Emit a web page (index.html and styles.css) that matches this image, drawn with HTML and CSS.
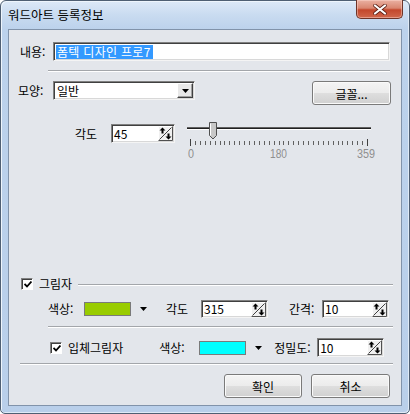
FILE: index.html
```html
<!DOCTYPE html>
<html lang="ko">
<head>
<meta charset="utf-8">
<title>워드아트 등록정보</title>
<link rel="stylesheet" href="styles.css">
</head>
<body>
<div class="window">
  <div class="titlebar">
    <span class="title">워드아트 등록정보</span>
    <div class="close">
      <svg width="14" height="11" viewBox="0 0 14 11"><path d="M2 1.5L12 9.5M12 1.5L2 9.5" stroke="#5a1e14" stroke-width="3.6" stroke-linecap="round"/><path d="M2 1.5L12 9.5M12 1.5L2 9.5" stroke="#ffffff" stroke-width="2.2" stroke-linecap="round"/></svg>
    </div>
  </div>
  <div class="client">
    <div class="row r-content">
      <span class="lbl w33">내용:</span>
      <div class="field textbox"><span class="selected">폼텍 디자인 프로7</span></div>
    </div>
    <div class="sep sep1"></div>
    <div class="row r-shape">
      <span class="lbl w33 lbl-shape">모양:</span>
      <div class="field combo">
        <span class="combo-text">일반</span>
        <span class="dd-btn"><svg width="7" height="4" viewBox="0 0 7 4"><path d="M0 0H7L3.5 4Z" fill="#000"/></svg></span>
      </div>
      <button class="btn btn-font">글꼴...</button>
    </div>
    <div class="row r-angle">
      <span class="lbl lbl-angle">각도</span>
      <div class="field spin spin-angle"><span class="val">45</span><svg class="spin-ic" width="15" height="15" viewBox="0 0 15 15"><rect x="0" y="0" width="15" height="15" fill="#f0f0f0"/><path d="M0.5 14V0.5H14" stroke="#ffffff" fill="none"/><path d="M14.5 0.5V14.5H0.5" stroke="#505050" fill="none"/><path d="M1.5 13.5L13.5 1.5" stroke="#404040"/><path d="M4.5 1.5L1.5 4.5H3.5V7.5H5.5V4.5H7.5Z" fill="#000"/><path d="M10.5 13.5L7.5 10.5H9.5V7.5H11.5V10.5H13.5Z" fill="#000"/></svg></div>
      <div class="slider">
        <svg width="196" height="46" viewBox="0 0 196 46">
          <rect x="4" y="7" width="184" height="1" fill="#606060"/>
          <rect x="4" y="8" width="184" height="1" fill="#202020"/>
          <rect x="4" y="9" width="184" height="1" fill="#ffffff"/>
          <g fill="#404040">
            <rect x="7" y="19" width="1" height="7"/>
            <rect x="184" y="19" width="1" height="7"/>
          </g>
          <g id="ticks" fill="#606060"></g>
          <path d="M26.5 2.5H33.5V15.5L30 19L26.5 15.5Z" fill="#c8c8c8" stroke="#505050"/>
          <path d="M27.5 3.5V15.5" stroke="#ffffff"/>
          <g font-family="Liberation Sans, Arial, sans-serif" font-size="13" fill="#8f8f8f">
            <text x="5" y="38" textLength="6" lengthAdjust="spacingAndGlyphs">0</text>
            <text x="87" y="38" textLength="17" lengthAdjust="spacingAndGlyphs">180</text>
            <text x="174" y="38" textLength="18" lengthAdjust="spacingAndGlyphs">359</text>
          </g>
        </svg>
      </div>
    </div>

    <div class="row g-head">
      <span class="check"><svg width="8" height="7" viewBox="0 0 8 7"><path d="M0.5 3L3 5.5L7.5 0.5" stroke="#000" stroke-width="1.8" fill="none"/></svg></span>
      <span class="lbl ml6">그림자</span>
      <span class="sep-inline"></span>
    </div>
    <div class="row g-row1">
      <span class="lbl lbl-color1">색상:</span>
      <span class="swatch green"></span>
      <span class="arrow"><svg width="7" height="4" viewBox="0 0 7 4"><path d="M0 0H7L3.5 4Z" fill="#000"/></svg></span>
      <span class="lbl lbl-angle2">각도</span>
      <div class="field spin spin67"><span class="val">315</span><svg class="spin-ic" width="15" height="15" viewBox="0 0 15 15"><rect x="0" y="0" width="15" height="15" fill="#f0f0f0"/><path d="M0.5 14V0.5H14" stroke="#ffffff" fill="none"/><path d="M14.5 0.5V14.5H0.5" stroke="#505050" fill="none"/><path d="M1.5 13.5L13.5 1.5" stroke="#404040"/><path d="M4.5 1.5L1.5 4.5H3.5V7.5H5.5V4.5H7.5Z" fill="#000"/><path d="M10.5 13.5L7.5 10.5H9.5V7.5H11.5V10.5H13.5Z" fill="#000"/></svg></div>
      <span class="lbl lbl-gap">간격:</span>
      <div class="field spin spin67"><span class="val">10</span><svg class="spin-ic" width="15" height="15" viewBox="0 0 15 15"><rect x="0" y="0" width="15" height="15" fill="#f0f0f0"/><path d="M0.5 14V0.5H14" stroke="#ffffff" fill="none"/><path d="M14.5 0.5V14.5H0.5" stroke="#505050" fill="none"/><path d="M1.5 13.5L13.5 1.5" stroke="#404040"/><path d="M4.5 1.5L1.5 4.5H3.5V7.5H5.5V4.5H7.5Z" fill="#000"/><path d="M10.5 13.5L7.5 10.5H9.5V7.5H11.5V10.5H13.5Z" fill="#000"/></svg></div>
    </div>
    <div class="sep sep2"></div>
    <div class="row g-row2">
      <span class="check check2"><svg width="8" height="7" viewBox="0 0 8 7"><path d="M0.5 3L3 5.5L7.5 0.5" stroke="#000" stroke-width="1.8" fill="none"/></svg></span>
      <span class="lbl ml6">입체그림자</span>
      <span class="lbl lbl-color2">색상:</span>
      <span class="swatch cyan"></span>
      <span class="arrow"><svg width="7" height="4" viewBox="0 0 7 4"><path d="M0 0H7L3.5 4Z" fill="#000"/></svg></span>
      <span class="lbl lbl-prec">정밀도:</span>
      <div class="field spin spin67 h19"><span class="val">10</span><svg class="spin-ic" width="15" height="15" viewBox="0 0 15 15"><rect x="0" y="0" width="15" height="15" fill="#f0f0f0"/><path d="M0.5 14V0.5H14" stroke="#ffffff" fill="none"/><path d="M14.5 0.5V14.5H0.5" stroke="#505050" fill="none"/><path d="M1.5 13.5L13.5 1.5" stroke="#404040"/><path d="M4.5 1.5L1.5 4.5H3.5V7.5H5.5V4.5H7.5Z" fill="#000"/><path d="M10.5 13.5L7.5 10.5H9.5V7.5H11.5V10.5H13.5Z" fill="#000"/></svg></div>
    </div>
    <div class="sep sep3"></div>
    <div class="row r-buttons">
      <button class="btn btn-ok">확인</button>
      <button class="btn btn-cancel">취소</button>
    </div>
  </div>
</div>
<script>
  var g = document.getElementById('ticks');
  var ns = 'http://www.w3.org/2000/svg';
  for (var i = 1; i < 36; i++) {
    var r = document.createElementNS(ns, 'rect');
    r.setAttribute('x', Math.round(7 + i * 177 / 36));
    r.setAttribute('y', 21);
    r.setAttribute('width', 1);
    r.setAttribute('height', 4);
    g.appendChild(r);
  }
</script>
</body>
</html>
```

FILE: styles.css
```css
* { box-sizing: border-box; }
html, body {
  margin: 0;
  padding: 0;
  width: 410px;
  height: 414px;
  overflow: hidden;
  background: #ffffff;
}
body {
  font-family: "Noto Sans CJK KR", "Noto Sans", sans-serif;
  font-size: 12px;
  color: #000;
}
.window {
  width: 410px;
  height: 414px;
  border: 1px solid #4f5f73;
  border-radius: 6px 6px 5px 5px;
  background: linear-gradient(#dde9f7 0px, #c9dbf0 14px, #bcd2ec 28px, #b9cfea 100%);
  padding: 0 7px 7px 7px;
  display: flex;
  flex-direction: column;
  box-shadow: inset 1px 1px 0 #eef5fc, inset -1px -1px 0 #dfeaf6;
}
.titlebar {
  height: 28px;
  display: flex;
  align-items: flex-start;
  justify-content: space-between;
}
.title {
  margin-top: 6px;
  line-height: 16px;
  font-size: 12.5px;
  color: #000;
}
.close {
  width: 47px;
  height: 19px;
  margin-top: -1px;
  margin-right: -1px;
  border: 1px solid #6e3428;
  border-top: none;
  border-radius: 0 0 5px 5px;
  background: linear-gradient(#eab1a2 0%, #d98670 45%, #c3472c 55%, #d0674b 100%);
  box-shadow: inset 0 0 0 1px rgba(255,220,210,0.45);
  display: flex;
  align-items: center;
  justify-content: center;
}
.client {
  flex: 1;
  border: 1px solid #8193aa;
  background: #e3e6eb;
  padding: 0 8px 0 11px;
  display: flex;
  flex-direction: column;
}
.row {
  display: flex;
  align-items: center;
}
.lbl {
  white-space: nowrap;
  line-height: 16px;
}
.w33 { width: 33px; }
.ml6 { margin-left: 6px; }

.field {
  background: #fff;
  border-style: solid;
  border-width: 1px;
  border-color: #808080 #f4f4f4 #f4f4f4 #808080;
  box-shadow: inset 1px 1px 0 #404040, inset -1px -1px 0 #d8d8d8;
  display: flex;
  align-items: center;
}

.r-content { margin-top: 12px; height: 19px; }
.textbox { width: 337px; height: 19px; padding-left: 2px; }
.selected {
  background: #3399ff;
  color: #fff;
  line-height: 14px;
  padding: 0 2px 0 1px;
  letter-spacing: 0.3px;
}

.sep {
  height: 2px;
  border-top: 1px solid #a3a6aa;
  border-bottom: 1px solid #ffffff;
}
.sep1 { margin: 9px 0 0 28px; width: 342px; }
.sep2 { margin: 8px 0 0 28px; width: 345px; }
.sep3 { margin: 6px 0 0 0; width: 373px; }

.r-shape { margin-top: 9px; height: 24px; align-items: flex-start; }
.lbl-shape { margin-left: -2px; width: 35px; line-height: 19px; }
.combo { width: 142px; height: 19px; padding-left: 3px; justify-content: space-between; }
.combo-text { line-height: 15px; }
.dd-btn {
  width: 16px;
  height: 15px;
  margin-right: 1px;
  background: #e8e8e8;
  border-style: solid;
  border-width: 1px;
  border-color: #ffffff #404040 #404040 #ffffff;
  box-shadow: inset -1px -1px 0 #a0a0a0;
  display: flex;
  align-items: center;
  justify-content: center;
}
.btn {
  font-family: "Noto Sans CJK KR", "Noto Sans", sans-serif;
  font-size: 12px;
  color: #000;
  height: 24px;
  padding: 0;
  border: 1px solid #7a7a7a;
  border-radius: 3px;
  background: linear-gradient(#f4f4f4 0%, #ececec 48%, #dedede 52%, #d0d0d0 100%);
  box-shadow: inset 0 0 0 1px #fafafa;
}
.btn-font { margin-left: 117px; width: 79px; }

.r-angle { margin-top: 19px; height: 19px; align-items: flex-start; }
.lbl-angle { margin-left: 55px; width: 36px; line-height: 19px; }
.spin { justify-content: space-between; padding-left: 2px; padding-right: 1px; }
.spin-angle { width: 64px; height: 19px; }
.spin67 { width: 67px; height: 18px; }
.h19 { height: 19px; }
.val { line-height: 14px; }
.spin-ic { display: block; }
.slider { margin-left: 8px; margin-top: -4px; width: 196px; height: 46px; }
.slider svg { display: block; }

.g-head { margin-top: 134px; height: 13px; }
.check {
  width: 12px;
  height: 12px;
  margin-left: 1px;
  background: #fff;
  border-style: solid;
  border-width: 1px;
  border-color: #808080 #ffffff #ffffff #808080;
  box-shadow: inset 1px 1px 0 #404040;
  display: flex;
  align-items: center;
  justify-content: center;
  padding: 1px 0 0 1px;
}
.sep-inline {
  flex: 1;
  margin-left: 6px;
  margin-top: 2px;
  height: 2px;
  border-top: 1px solid #a3a6aa;
  border-bottom: 1px solid #ffffff;
}

.g-row1 { margin-top: 10px; height: 18px; }
.lbl-color1 { margin-left: 28px; width: 36px; }
.swatch {
  width: 47px;
  height: 14px;
  border: 1px solid #7a7a7a;
}
.green { background: #99cc00; }
.cyan { background: #00ffff; }
.arrow { margin-left: 9px; display: flex; align-items: center; }
.lbl-angle2 { margin-left: 19px; width: 35px; }
.lbl-gap { margin-left: 21px; width: 33px; }

.g-row2 { margin-top: 10px; height: 19px; }
.check2 { margin-left: 30px; }
.lbl-color2 { margin-left: 36px; width: 40px; }
.lbl-prec { margin-left: 12px; width: 43px; }

.r-buttons { margin-top: 9px; justify-content: flex-end; padding-right: 3px; }
.btn-ok { width: 78px; }
.btn-cancel { width: 79px; margin-left: 9px; }
```
